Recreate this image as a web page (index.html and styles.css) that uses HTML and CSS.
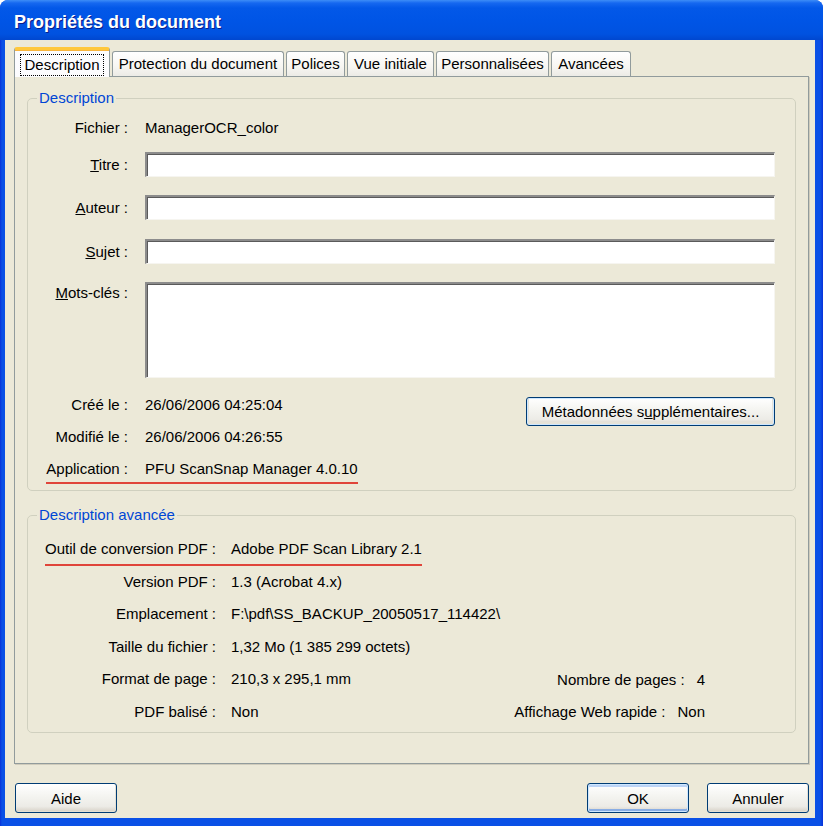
FILE: index.html
```html
<!DOCTYPE html>
<html lang="fr">
<head>
    <meta charset="UTF-8">
    <title>Propriétés du document</title>
    <link rel="stylesheet" href="styles.css">
</head>
<body>
    <div class="window">
        <div class="titlebar">Propriétés du document</div>
        <div class="client">
            <div class="tabs">
                <div class="tab active"><span class="focus">Description</span></div>
                <div class="tab t-protect">Protection du document</div>
                <div class="tab t-fonts">Polices</div>
                <div class="tab t-view">Vue initiale</div>
                <div class="tab t-custom">Personnalisées</div>
                <div class="tab t-adv">Avancées</div>
            </div>
            <div class="panel">
                <fieldset class="group group-desc">
                    <legend>Description</legend>
                    <div class="row r-file">
                        <span class="lab">Fichier :</span>
                        <span class="val">ManagerOCR_color</span>
                    </div>
                    <div class="row r-field r-title">
                        <span class="lab"><u>T</u>itre :</span>
                        <div class="input"></div>
                    </div>
                    <div class="row r-field r-author">
                        <span class="lab"><u>A</u>uteur :</span>
                        <div class="input"></div>
                    </div>
                    <div class="row r-field r-subject">
                        <span class="lab"><u>S</u>ujet :</span>
                        <div class="input"></div>
                    </div>
                    <div class="row r-keys">
                        <span class="lab"><u>M</u>ots-clés :</span>
                        <div class="input textarea"></div>
                    </div>
                    <div class="row r-info r-created">
                        <span class="lab">Créé le :</span>
                        <span class="val">26/06/2006 04:25:04</span>
                        <button class="btn btn-meta">Métadonnées s<u>u</u>pplémentaires...</button>
                    </div>
                    <div class="row r-info">
                        <span class="lab">Modifié le :</span>
                        <span class="val">26/06/2006 04:26:55</span>
                    </div>
                    <div class="row r-info">
                        <span class="lab"><span class="hl hl-lab">Application :</span></span>
                        <span class="val"><span class="hl">PFU ScanSnap Manager 4.0.10</span></span>
                    </div>
                </fieldset>

                <fieldset class="group group-adv">
                    <legend>Description avancée</legend>
                    <div class="row r-first">
                        <span class="lab"><span class="hl hl-lab hl-low">Outil de conversion PDF :</span></span>
                        <span class="val"><span class="hl hl-low">Adobe PDF Scan Library 2.1</span></span>
                    </div>
                    <div class="row">
                        <span class="lab">Version PDF :</span>
                        <span class="val">1.3 (Acrobat 4.x)</span>
                    </div>
                    <div class="row">
                        <span class="lab">Emplacement :</span>
                        <span class="val">F:\pdf\SS_BACKUP_20050517_114422\</span>
                    </div>
                    <div class="row">
                        <span class="lab">Taille du fichier :</span>
                        <span class="val">1,32 Mo (1 385 299 octets)</span>
                    </div>
                    <div class="row">
                        <span class="lab">Format de page :</span>
                        <span class="val">210,3 x 295,1 mm</span>
                        <span class="side"><span>Nombre de pages :</span><span>4</span></span>
                    </div>
                    <div class="row">
                        <span class="lab">PDF balisé :</span>
                        <span class="val">Non</span>
                        <span class="side"><span>Affichage Web rapide :</span><span>Non</span></span>
                    </div>
                </fieldset>
            </div>
            <div class="buttons">
                <button class="btn">Aide</button>
                <button class="btn btn-default btn-ok">OK</button>
                <button class="btn">Annuler</button>
            </div>
        </div>
    </div>
</body>
</html>
```

FILE: styles.css
```css
* {
    margin: 0;
    padding: 0;
    box-sizing: border-box;
}

body {
    background: #ffffff;
    font-family: "Liberation Sans", Arial, sans-serif;
    font-size: 15px;
    color: #000000;
}

.window {
    display: flex;
    flex-direction: column;
    width: 823px;
    height: 826px;
    border-radius: 8px 8px 0 0;
    background: linear-gradient(to right, #0831d9 0, #0a50e6 2px, #0a50e6 calc(100% - 3px), #0831d9 100%);
    overflow: hidden;
}

.titlebar {
    height: 40px;
    padding: 5px 0 0 14px;
    line-height: 34px;
    font-size: 18px;
    font-weight: bold;
    color: #ffffff;
    text-shadow: 1px 1px 0 #0a1e8a;
    background: linear-gradient(to bottom, #3d8df7 0, #1668f0 3px, #0358e8 8px, #0055e6 50%, #0052e0 85%, #0047cf 100%);
}

.client {
    flex: 1;
    display: flex;
    flex-direction: column;
    margin: 0 8px 8px 5px;
    padding: 7px 6px 5px 9px;
    background: #ece9d8;
}

/* tabs */

.tabs {
    display: flex;
    align-items: flex-end;
    gap: 2px;
    height: 30px;
    position: relative;
    z-index: 1;
}

.tab {
    height: 25px;
    margin-bottom: 1px;
    line-height: 23px;
    text-align: center;
    white-space: nowrap;
    border: 1px solid #919b9c;
    border-bottom: none;
    border-radius: 3px 3px 0 0;
    background: linear-gradient(to bottom, #ffffff, #f7f6f2 60%, #ecebe6);
}

.tab.active {
    width: 96px;
    height: 30px;
    margin-bottom: 0;
    padding-top: 4px;
    line-height: 20px;
    border-top: 3px solid #ffc83c;
    background: #fcfcfe;
    box-shadow: inset 0 1px 0 #f8b43c;
}

.focus {
    display: inline-block;
    padding: 0 3px;
    border: 1px dotted #000000;
}

.t-protect { width: 172px; }
.t-fonts { width: 59px; }
.t-view { width: 87px; }
.t-custom { width: 113px; }
.t-adv { width: 80px; }

.panel {
    flex: 1;
    margin: -1px 0 0 0;
    padding: 12px 12px 0 12px;
    border: 1px solid #919b9c;
    background: #ece9d8;
    box-shadow: 1px 1px 0 #d0ccbc;
}

/* group boxes */

.group {
    border: 1px solid #d0d0bf;
    border-radius: 5px;
    padding: 0 20px 5px 0;
}

.group legend {
    margin-left: 9px;
    padding: 0 2px;
    line-height: 18px;
    color: #0046d5;
}

.group-adv {
    margin-top: 15px;
    padding-bottom: 4px;
}

.row {
    display: flex;
    align-items: center;
    height: 32px;
    white-space: nowrap;
}

.lab {
    flex: none;
    width: 100px;
    margin-right: 17px;
    text-align: right;
    line-height: 18px;
}

.val {
    line-height: 18px;
}

.group-adv .lab {
    width: 188px;
    margin-right: 15px;
}

.group-adv .row {
    height: 32.5px;
}

.r-file {
    margin-top: 9px;
    height: 24px;
}

.r-field {
    height: 25px;
}

.r-title { margin-top: 12px; }
.r-author { margin-top: 18px; }
.r-subject { margin-top: 19px; }

.r-keys {
    margin-top: 18px;
    height: 96px;
    align-items: flex-start;
}

.r-keys .lab {
    margin-top: 2px;
}

.r-created {
    margin-top: 11px;
}

.r-first {
    margin-top: 9px;
}

.input {
    flex: 1;
    height: 25px;
    background: #ffffff;
    border-top: 2px solid #8c8c8c;
    border-left: 2px solid #8c8c8c;
    border-right: 1px solid #f6f5f0;
    border-bottom: 1px solid #f6f5f0;
    box-shadow: inset 1px 1px 0 #5a5a5a;
}

.input.textarea {
    height: 96px;
}

/* red marks under two of the rows */
.hl {
    padding-bottom: 5px;
    border-bottom: 2px solid #e0453a;
}

.hl-lab {
    padding-right: 17px;
    margin-right: -17px;
}

.group-adv .hl-lab {
    padding-right: 15px;
    margin-right: -15px;
}

.hl.hl-low {
    padding-bottom: 7px;
}

.side {
    display: flex;
    gap: 12px;
    margin-left: auto;
    margin-right: 70px;
}

/* buttons */

.btn {
    font-family: inherit;
    font-size: 15px;
    color: #000000;
    width: 102px;
    height: 30px;
    border: 1px solid #003c74;
    border-radius: 3px;
    background: linear-gradient(to bottom, #ffffff 0, #f4f4f0 45%, #ecebe6 80%, #d6d0c5 100%);
    box-shadow: inset -1px -1px 0 #e3e0d5;
}

.btn-meta {
    width: 249px;
    height: 29px;
    margin: 8px 0 0 auto;
    align-self: flex-start;
    box-shadow: inset 0 0 0 1px #cee7ff, inset 0 -1px 0 2px #e6e3d8;
}

.btn-default {
    box-shadow: inset 0 0 0 1px #cee7ff, inset 0 2px 0 1px #bcd4f6, inset 0 -2px 0 1px #89ade4;
}

.buttons {
    display: flex;
    gap: 18px;
    margin-top: 19px;
    padding-left: 1px;
}

.btn-ok {
    margin-left: auto;
}
```
